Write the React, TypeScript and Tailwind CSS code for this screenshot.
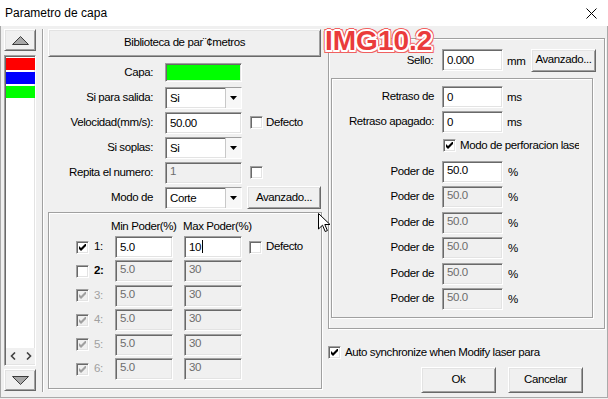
import type { ReactNode } from 'react'

const sunken =
  'border border-t-[#a0a0a0] border-l-[#a0a0a0] border-r-white border-b-white shadow-[inset_1px_1px_0_#696969,inset_-1px_-1px_0_#e3e3e3]'
const raised =
  'border border-t-white border-l-white border-r-[#696969] border-b-[#696969] shadow-[inset_1px_1px_0_#e3e3e3,inset_-1px_-1px_0_#a0a0a0] bg-[#f0f0f0]'
const etched = 'border border-[#a0a0a0] shadow-[inset_1px_1px_0_#fff,1px_1px_0_#fff]'

function TextBox({
  value,
  className = 'w-[77px]',
  disabled = false,
  caret = false,
  high = false,
}: {
  value: string
  className?: string
  disabled?: boolean
  caret?: boolean
  high?: boolean
}) {
  return (
    <div
      className={`${sunken} ${className} h-[22px] shrink-0 pl-[4px] leading-[14px] ${high ? 'pt-[1px]' : 'pt-[3px]'} ${
        disabled ? 'bg-[#f0f0f0] text-[#6d6d6d]' : 'bg-white text-black'
      }`}
    >
      {value}
      {caret && <span className="inline-block w-px h-[13px] bg-black align-top ml-px" />}
    </div>
  )
}

function Check({ checked = false, disabled = false }: { checked?: boolean; disabled?: boolean }) {
  return (
    <div
      className={`${sunken} w-[13px] h-[13px] shrink-0 flex items-center justify-center ${
        disabled ? 'bg-[#f0f0f0]' : 'bg-white'
      }`}
    >
      {checked && (
        <svg width="7" height="7" viewBox="0 0 7 7">
          <polygon points="0,2 2,4 7,-1 7,2 2,7 0,5" fill={disabled ? '#a0a0a0' : '#000'} />
        </svg>
      )}
    </div>
  )
}

function Combo({ value }: { value: string }) {
  return (
    <div className={`${sunken} bg-white w-[77px] h-[22px] flex items-stretch shrink-0`}>
      <span className="flex-1 pl-[4px] pt-[3px] leading-[14px]">{value}</span>
      <span className="w-[16px] border-l border-[#c8c8c8] bg-[#f7f7f7] flex items-center justify-center">
        <svg width="7" height="4" viewBox="0 0 7 4">
          <polygon points="0,0 7,0 3.5,4" fill="#000" />
        </svg>
      </span>
    </div>
  )
}

function Button({ children, className }: { children: ReactNode; className: string }) {
  return <div className={`${raised} ${className} shrink-0 flex items-center justify-center`}>{children}</div>
}

function Row({ label, children }: { label: string; children: ReactNode }) {
  return (
    <div className="h-[25px] flex items-center">
      <span className="w-[105px] text-right">{label}</span>
      <div className="ml-[12px] flex items-center">{children}</div>
    </div>
  )
}

function Tri({ down = false }: { down?: boolean }) {
  return (
    <svg width="17" height="9" viewBox="0 0 17 9">
      <polygon
        points={down ? '0.5,0.5 16.5,0.5 8.5,8.5' : '0.5,8.5 16.5,8.5 8.5,0.5'}
        fill="#a8a8a8"
        stroke="#3c3c3c"
      />
    </svg>
  )
}

const POWER = [
  { n: '1:', on: true, dis: false, min: '5.0', max: '10', h: 'h-[24px]' },
  { n: '2:', on: false, dis: false, min: '5.0', max: '30', h: 'h-[24px]' },
  { n: '3:', on: true, dis: true, min: '5.0', max: '30', h: 'h-[25px]' },
  { n: '4:', on: true, dis: true, min: '5.0', max: '30', h: 'h-[24px]' },
  { n: '5:', on: true, dis: true, min: '5.0', max: '30', h: 'h-[25px]' },
  { n: '6:', on: true, dis: true, min: '5.0', max: '30', h: 'h-[24px]' },
]

const PODER = ['h-[25px]', 'h-[26px]', 'h-[25px]', 'h-[26px]', 'h-[25px]', 'h-[26px]']

export default function App() {
  return (
    <div className="relative w-[608px] h-[399px] overflow-hidden bg-[#f0f0f0] text-[11.5px] text-black font-['Liberation_Sans',Arial,sans-serif] tracking-[-0.4px]">
      {/* title bar */}
      <div className="h-[26px] bg-white flex items-center pl-[5px] text-[12px] tracking-normal">
        <span>Parametro de capa</span>
        <svg className="ml-auto mr-[11px]" width="11" height="11" viewBox="0 0 11 11">
          <path d="M0.5 0.5 L10.5 10.5 M10.5 0.5 L0.5 10.5" stroke="#000" strokeWidth="1" />
        </svg>
      </div>

      <div className="h-[372px] flex border-l border-r border-b border-[#aaaaaa]">
        {/* layer list */}
        <div className="w-[41px] pl-[3px] pt-[3px] flex flex-col">
          <Button className="w-[32px] h-[22px]">
            <Tri />
          </Button>
          <div className={`${sunken} mt-[4px] w-[32px] h-[311px] bg-white flex flex-col pt-[2px] pl-px`}>
            <div className="h-[12px] w-[29px] bg-[#ff0000]" />
            <div className="h-[12px] w-[29px] bg-[#0000ff] mt-[2px]" />
            <div className="h-[12px] w-[29px] bg-[#00ff00] mt-[2px]" />
            <div className="mt-auto mb-px h-[16px] bg-[#f0f0f0] flex items-center gap-[10px] pl-[4px]">
              <svg width="6" height="8" viewBox="0 0 6 8">
                <polyline points="5,0.5 1.5,4 5,7.5" fill="none" stroke="#404040" strokeWidth="1.6" />
              </svg>
              <svg width="6" height="8" viewBox="0 0 6 8">
                <polyline points="1,0.5 4.5,4 1,7.5" fill="none" stroke="#404040" strokeWidth="1.6" />
              </svg>
            </div>
          </div>
          <Button className="mt-[3px] w-[32px] h-[22px]">
            <Tri down />
          </Button>
        </div>

        {/* separator */}
        <div className="mt-[3px] h-[363px] w-[2px] border-l border-[#a0a0a0] border-r border-r-white" />

        {/* left panel */}
        <div className="ml-[4px] w-[274px] flex flex-col">
          <Button className="mt-[3px] w-[273px] h-[28px]">Biblioteca de par¨¢metros</Button>
          <div className="mt-[3px] flex flex-col">
            <Row label="Capa:">
              <div className={`${sunken} w-[77px] h-[19px] bg-[#00ff00]`} />
            </Row>
            <Row label="Si para salida:">
              <Combo value="Si" />
            </Row>
            <Row label="Velocidad(mm/s):">
              <TextBox value="50.00" />
              <div className="ml-[8px]">
                <Check />
              </div>
              <span className="ml-[3px]">Defecto</span>
            </Row>
            <Row label="Si soplas:">
              <Combo value="Si" />
            </Row>
            <Row label="Repita el numero:">
              <TextBox value="1" disabled high />
              <div className="ml-[8px]">
                <Check />
              </div>
            </Row>
            <Row label="Modo de">
              <Combo value="Corte" />
              <Button className="ml-[5px] w-[74px] h-[23px]">Avanzado...</Button>
            </Row>
          </div>

          <div className={`${etched} mt-[2px] w-[274px] h-[177px] pt-[5px] flex flex-col`}>
            <div className="h-[17px] flex items-center">
              <span className="ml-[62px] w-[72px]">Min Poder(%)</span>
              <span>Max Poder(%)</span>
            </div>
            {POWER.map((p, i) => (
              <div key={p.n} className={`${p.h} flex items-center`}>
                <div className="ml-[27px]">
                  <Check checked={p.on} disabled={p.dis} />
                </div>
                <span
                  className={`ml-[5px] w-[21px] ${p.dis ? 'text-[#a0a0a0]' : 'text-black'} ${
                    p.n === '2:' ? 'font-bold' : ''
                  }`}
                >
                  {p.n}
                </span>
                <TextBox value={p.min} className="w-[58px]" disabled={i > 0} high={i > 0} />
                <div className="ml-[11px]">
                  <TextBox value={p.max} className="w-[58px]" disabled={i > 0} high={i > 0} caret={i === 0} />
                </div>
                {i === 0 && (
                  <>
                    <div className="ml-[7px]">
                      <Check />
                    </div>
                    <span className="ml-[4px]">Defecto</span>
                  </>
                )}
              </div>
            ))}
          </div>
        </div>

        {/* right panel */}
        <div className="ml-[6px] w-[277px] flex flex-col">
          <div className={`${etched} mt-[12px] h-[291px] flex flex-col`}>
            <div className="mt-[9px] h-[24px] flex items-center">
              <span className="w-[104px] text-right leading-[12px]">Sello:</span>
              <TextBox value="0.000" className="ml-[9px] w-[61px]" />
              <span className="ml-[4px] w-[24px] pt-[3px]">mm</span>
              <Button className="w-[65px] h-[23px]">Avanzado...</Button>
            </div>
            <div className={`${etched} mt-[6px] ml-[2px] w-[262px] h-[240px] pt-[5px] flex flex-col`}>
              <div className="h-[25px] flex items-center">
                <span className="w-[102px] text-right">Retraso de</span>
                <TextBox value="0" className="ml-[8px] w-[61px]" />
                <span className="ml-[4px] pt-[2px]">ms</span>
              </div>
              <div className="h-[25px] flex items-center">
                <span className="w-[102px] text-right">Retraso apagado:</span>
                <TextBox value="0" className="ml-[8px] w-[61px]" />
                <span className="ml-[4px] pt-[2px]">ms</span>
              </div>
              <div className="h-[23px] flex items-center">
                <div className="ml-[111px]">
                  <Check checked />
                </div>
                <span className="ml-[4px] w-[119px] overflow-hidden whitespace-nowrap">
                  Modo de perforacion laser
                </span>
              </div>
              <div className="mt-[2px] flex flex-col">
                {PODER.map((h, i) => (
                  <div key={i} className={`${h} flex items-center`}>
                    <span className="w-[102px] text-right">Poder de</span>
                    <TextBox value="50.0" className="ml-[8px] w-[61px]" disabled={i > 0} high />
                    <span className="ml-[5px] pt-[2px]">%</span>
                  </div>
                ))}
              </div>
            </div>
          </div>

          <div className="mt-[12px] h-[23px] flex items-center">
            <Check checked />
            <span className="ml-[4px]">Auto synchronize when Modify laser para</span>
          </div>
          <div className="mt-[3px] h-[26px] flex justify-end gap-[12px] pr-[22px]">
            <Button className="w-[75px] h-[26px]">Ok</Button>
            <Button className="w-[75px] h-[26px]">Cancelar</Button>
          </div>
        </div>
      </div>

      {/* watermark */}
      <div className="absolute left-[325px] top-[29px] text-[28px] font-bold tracking-normal leading-[24px] text-[#ea3b3b] [text-shadow:-2px_0_0_#fff,2px_0_0_#fff,0_-2px_0_#fff,0_2px_0_#fff,-1.5px_-1.5px_0_#fff,1.5px_-1.5px_0_#fff,-1.5px_1.5px_0_#fff,1.5px_1.5px_0_#fff,-3px_0_0_#f06060,3px_0_0_#f06060,0_-3px_0_#f06060,0_3px_0_#f06060,-2.5px_-2.5px_0_#f06060,2.5px_-2.5px_0_#f06060,-2.5px_2.5px_0_#f06060,2.5px_2.5px_0_#f06060]">
        IMG10.2
      </div>

      {/* mouse pointer */}
      <svg className="absolute left-[318px] top-[213px]" width="13" height="20" viewBox="0 0 13 20">
        <polygon
          points="0.5,0.5 0.5,16 4.5,12.2 7.2,18.5 9.4,17.6 6.8,11.5 12,11.5"
          fill="#fff"
          stroke="#000"
          strokeWidth="1"
        />
      </svg>
    </div>
  )
}
